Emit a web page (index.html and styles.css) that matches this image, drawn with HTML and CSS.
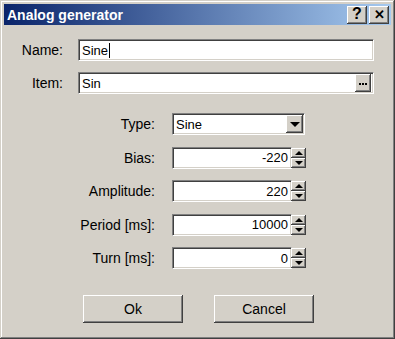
FILE: index.html
```html
<!DOCTYPE html>
<html lang="en">

<head>
    <meta charset="UTF-8" />
    <title>Analog generator</title>
    <link rel="stylesheet" href="styles.css">
</head>

<body>

    <div class="window">
        <!-- Title bar -->
        <div class="titlebar">
            <span class="title">Analog generator</span>
            <div class="title-btns">
                <button class="cap-btn">?</button>
                <button class="cap-btn close">&#x2715;</button>
            </div>
        </div>

        <div class="content">
            <!-- Top fields -->
            <div class="row top">
                <label class="lbl">Name:</label>
                <div class="field wide"><span>Sine</span><span class="caret"></span></div>
            </div>
            <div class="row top item-row">
                <label class="lbl">Item:</label>
                <div class="field wide">
                    <span class="grow">Sin</span>
                    <span class="dots"><i></i><i></i><i></i></span>
                </div>
            </div>

            <!-- Parameters -->
            <div class="params">
                <div class="row">
                    <label class="lbl2">Type:</label>
                    <div class="field select">
                        <span class="grow">Sine</span>
                        <span class="drop"><span class="tri down"></span></span>
                    </div>
                </div>
                <div class="row">
                    <label class="lbl2">Bias:</label>
                    <div class="spin-box">
                        <div class="field num">-220</div>
                        <div class="spin"><span><i class="tri up small"></i></span><span><i class="tri down small"></i></span></div>
                    </div>
                </div>
                <div class="row">
                    <label class="lbl2">Amplitude:</label>
                    <div class="spin-box">
                        <div class="field num">220</div>
                        <div class="spin"><span><i class="tri up small"></i></span><span><i class="tri down small"></i></span></div>
                    </div>
                </div>
                <div class="row">
                    <label class="lbl2">Period [ms]:</label>
                    <div class="spin-box">
                        <div class="field num">10000</div>
                        <div class="spin"><span><i class="tri up small"></i></span><span><i class="tri down small"></i></span></div>
                    </div>
                </div>
                <div class="row">
                    <label class="lbl2">Turn [ms]:</label>
                    <div class="spin-box">
                        <div class="field num">0</div>
                        <div class="spin"><span><i class="tri up small"></i></span><span><i class="tri down small"></i></span></div>
                    </div>
                </div>
            </div>

            <!-- Buttons -->
            <div class="actions">
                <button class="btn">Ok</button>
                <button class="btn">Cancel</button>
            </div>
        </div>
    </div>

</body>

</html>
```

FILE: styles.css
```css
* {
    box-sizing: border-box;
    margin: 0;
    padding: 0;
    font-family: 'Liberation Sans', Arial, sans-serif;
}

body {
    background: #d4d0c8;
    width: 395px;
    height: 339px;
    overflow: hidden;
}

.window {
    width: 395px;
    height: 339px;
    background: #d4d0c8;
    padding: 4px;
    box-shadow: inset -1px -1px #404040, inset 1px 1px #d4d0c8, inset -2px -2px #808080, inset 2px 2px #fff;
    display: flex;
    flex-direction: column;
}

/* Title bar */
.titlebar {
    height: 21px;
    background: linear-gradient(to right, #0a246a, #a6caf0);
    display: flex;
    align-items: center;
    justify-content: space-between;
    padding: 0 2px 0 3px;
}

.title {
    color: #fff;
    font-weight: bold;
    font-size: 14px;
}

.title-btns {
    display: flex;
    gap: 2px;
}

.cap-btn {
    width: 20px;
    height: 18px;
    background: #d4d0c8;
    border: none;
    box-shadow: inset -1px -1px #404040, inset 1px 1px #fff, inset -2px -2px #808080;
    font-size: 16px;
    font-weight: bold;
    color: #000;
    display: flex;
    align-items: center;
    justify-content: center;
    padding-bottom: 1px;
}

.cap-btn.close {
    font-size: 13px;
}

.content {
    padding-top: 14px;
    display: flex;
    flex-direction: column;
}

.row {
    display: flex;
    align-items: center;
    height: 22px;
}

.item-row {
    margin-top: 11px;
}

.lbl {
    width: 59px;
    text-align: right;
    font-size: 14px;
    color: #000;
    margin-right: 15px;
}

.lbl2 {
    width: 151px;
    text-align: right;
    font-size: 14px;
    color: #000;
    margin-right: 17px;
}

/* Sunken field */
.field {
    height: 22px;
    background: #fff;
    border-top: 1px solid #808080;
    border-left: 1px solid #808080;
    border-bottom: 1px solid #fff;
    border-right: 1px solid #fff;
    box-shadow: inset 1px 1px #404040, inset -1px -1px #d4d0c8;
    display: flex;
    align-items: center;
    padding: 0 2px 0 3px;
    font-size: 13px;
    color: #000;
}

.wide {
    width: 296px;
}

.grow {
    flex: 1;
}

.caret {
    width: 1px;
    height: 15px;
    background: #000;
    margin-left: 1px;
}

.dots {
    width: 16px;
    height: 18px;
    background: #d4d0c8;
    box-shadow: inset -1px -1px #404040, inset 1px 1px #fff, inset -2px -2px #808080;
    display: flex;
    align-items: center;
    justify-content: center;
    gap: 1px;
    padding: 2px 1px 0 0;
}

.dots i {
    width: 2px;
    height: 2px;
    background: #000;
}

.params {
    margin-top: 19px;
    display: flex;
    flex-direction: column;
    gap: 11.5px;
}

.select {
    width: 133px;
    padding-right: 1px;
}

.drop {
    width: 17px;
    height: 18px;
    background: #d4d0c8;
    box-shadow: inset -1px -1px #404040, inset 1px 1px #fff, inset -2px -2px #808080;
    display: flex;
    align-items: center;
    justify-content: center;
}

.tri {
    display: block;
    width: 0;
    height: 0;
    border-left: 5px solid transparent;
    border-right: 5px solid transparent;
}

.tri.down {
    border-top: 5px solid #000;
}

.tri.up {
    border-bottom: 5px solid #000;
}

.tri.small {
    border-left-width: 4px;
    border-right-width: 4px;
}

.tri.small.down {
    border-top-width: 4px;
}

.tri.small.up {
    border-bottom-width: 4px;
}

.spin-box {
    display: flex;
    align-items: center;
    width: 134px;
}

.num {
    flex: 1;
    justify-content: flex-end;
    padding-right: 3px;
}

.spin {
    width: 15px;
    height: 20px;
    display: flex;
    flex-direction: column;
    margin-left: -1px;
}

.spin span {
    flex: 1;
    background: #d4d0c8;
    box-shadow: inset -1px -1px #404040, inset 1px 1px #fff, inset -2px -2px #808080;
    display: flex;
    align-items: center;
    justify-content: center;
}

.actions {
    margin-top: 26px;
    display: flex;
    gap: 31px;
    padding-left: 79px;
}

.btn {
    width: 100px;
    height: 28px;
    background: #d4d0c8;
    border: none;
    box-shadow: inset -1px -1px #404040, inset 1px 1px #fff, inset -2px -2px #808080;
    font-size: 14px;
    color: #000;
}
```
